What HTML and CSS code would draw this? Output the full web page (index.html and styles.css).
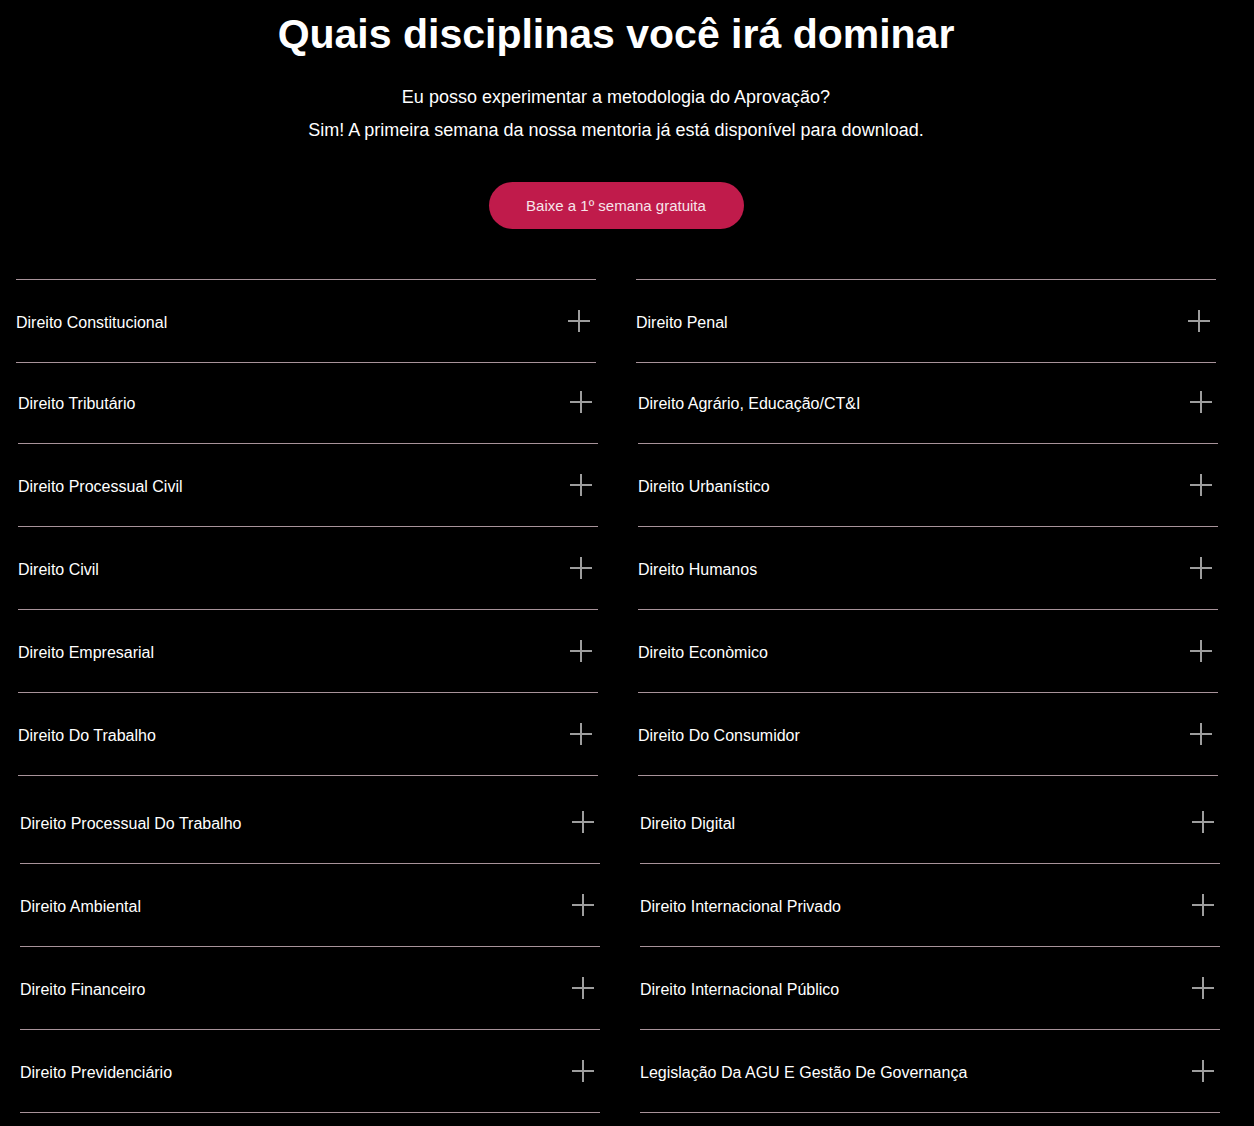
FILE: index.html
```html
<!DOCTYPE html>
<html lang="pt-BR">
<head>
<meta charset="utf-8">
<title>Quais disciplinas você irá dominar</title>
<link rel="stylesheet" href="styles.css">
</head>
<body>
<section class="section">
  <header class="intro">
    <h1 class="title">Quais disciplinas você irá dominar</h1>
    <p class="subtitle">Eu posso experimentar a metodologia do Aprovação?<br>Sim! A primeira semana da nossa mentoria já está disponível para download.</p>
    <a class="cta" href="#">Baixe a 1º semana gratuita</a>
  </header>

  <div class="columns">
    <div class="col">
      <div class="group g0">
        <div class="item first"><span>Direito Constitucional</span><svg class="plus" viewBox="0 0 22 22"><path d="M11 0v22M0 11h22"/></svg></div>
      </div>
      <div class="group g1">
        <div class="item short"><span>Direito Tributário</span><svg class="plus" viewBox="0 0 22 22"><path d="M11 0v22M0 11h22"/></svg></div>
        <div class="item"><span>Direito Processual Civil</span><svg class="plus" viewBox="0 0 22 22"><path d="M11 0v22M0 11h22"/></svg></div>
        <div class="item"><span>Direito Civil</span><svg class="plus" viewBox="0 0 22 22"><path d="M11 0v22M0 11h22"/></svg></div>
        <div class="item"><span>Direito Empresarial</span><svg class="plus" viewBox="0 0 22 22"><path d="M11 0v22M0 11h22"/></svg></div>
        <div class="item"><span>Direito Do Trabalho</span><svg class="plus" viewBox="0 0 22 22"><path d="M11 0v22M0 11h22"/></svg></div>
      </div>
      <div class="group g2">
        <div class="item tall"><span>Direito Processual Do Trabalho</span><svg class="plus" viewBox="0 0 22 22"><path d="M11 0v22M0 11h22"/></svg></div>
        <div class="item"><span>Direito Ambiental</span><svg class="plus" viewBox="0 0 22 22"><path d="M11 0v22M0 11h22"/></svg></div>
        <div class="item"><span>Direito Financeiro</span><svg class="plus" viewBox="0 0 22 22"><path d="M11 0v22M0 11h22"/></svg></div>
        <div class="item"><span>Direito Previdenciário</span><svg class="plus" viewBox="0 0 22 22"><path d="M11 0v22M0 11h22"/></svg></div>
      </div>
    </div>

    <div class="col">
      <div class="group g0">
        <div class="item first"><span>Direito Penal</span><svg class="plus" viewBox="0 0 22 22"><path d="M11 0v22M0 11h22"/></svg></div>
      </div>
      <div class="group g1">
        <div class="item short"><span>Direito Agrário, Educação/CT&amp;I</span><svg class="plus" viewBox="0 0 22 22"><path d="M11 0v22M0 11h22"/></svg></div>
        <div class="item"><span>Direito Urbanístico</span><svg class="plus" viewBox="0 0 22 22"><path d="M11 0v22M0 11h22"/></svg></div>
        <div class="item"><span>Direito Humanos</span><svg class="plus" viewBox="0 0 22 22"><path d="M11 0v22M0 11h22"/></svg></div>
        <div class="item"><span>Direito Econòmico</span><svg class="plus" viewBox="0 0 22 22"><path d="M11 0v22M0 11h22"/></svg></div>
        <div class="item"><span>Direito Do Consumidor</span><svg class="plus" viewBox="0 0 22 22"><path d="M11 0v22M0 11h22"/></svg></div>
      </div>
      <div class="group g2">
        <div class="item tall"><span>Direito Digital</span><svg class="plus" viewBox="0 0 22 22"><path d="M11 0v22M0 11h22"/></svg></div>
        <div class="item"><span>Direito Internacional Privado</span><svg class="plus" viewBox="0 0 22 22"><path d="M11 0v22M0 11h22"/></svg></div>
        <div class="item"><span>Direito Internacional Público</span><svg class="plus" viewBox="0 0 22 22"><path d="M11 0v22M0 11h22"/></svg></div>
        <div class="item"><span>Legislação Da AGU E Gestão De Governança</span><svg class="plus" viewBox="0 0 22 22"><path d="M11 0v22M0 11h22"/></svg></div>
      </div>
    </div>
  </div>
</section>
</body>
</html>
```
FILE: styles.css
```css
html, body {
  margin: 0;
  padding: 0;
  background: #000;
}

body {
  font-family: "Liberation Sans", Arial, sans-serif;
  color: #fff;
}

.section {
  width: 1200px;
  margin-left: 16px;
}

.intro {
  display: flex;
  flex-direction: column;
  align-items: center;
  text-align: center;
}

.title {
  margin: 0;
  padding-top: 10px;
  font-size: 41px;
  line-height: 49px;
  font-weight: 700;
  color: #fff;
}

.subtitle {
  margin: 22px 0 0;
  font-size: 18px;
  line-height: 33px;
  color: #fff;
}

.cta {
  margin-top: 35px;
  width: 255px;
  height: 47px;
  line-height: 47px;
  border-radius: 24px;
  background: #c01b4b;
  color: #f6e4ea;
  font-size: 15px;
  text-decoration: none;
}

.columns {
  margin-top: 50px;
  display: grid;
  grid-template-columns: 580px 580px;
  column-gap: 40px;
}

.group { width: 580px; }
.g1 { margin-left: 2px; }
.g2 { margin-left: 4px; }

.item {
  box-sizing: border-box;
  height: 83px;
  padding-top: 3px;
  padding-right: 6px;
  display: flex;
  align-items: center;
  justify-content: space-between;
  border-bottom: 1px solid #a8939a;
  font-size: 16px;
}

.item.first {
  height: 84px;
  padding-top: 4px;
  border-top: 1px solid #a8939a;
}

.item.short {
  height: 81px;
  padding-top: 2px;
}

.item.tall {
  height: 88px;
  padding-top: 8px;
}

.plus {
  width: 22px;
  height: 22px;
  flex: none;
  margin-bottom: 4px;
  stroke: #9d9d9d;
  stroke-width: 2;
  fill: none;
}
```
